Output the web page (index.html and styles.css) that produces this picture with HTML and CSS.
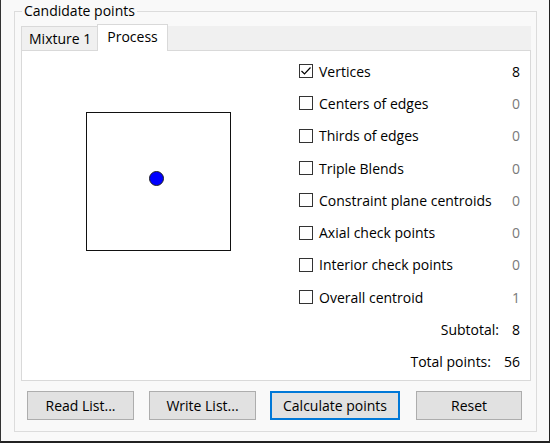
FILE: index.html
```html
<!DOCTYPE html>
<html>
<head>
<meta charset="utf-8">
<link rel="stylesheet" href="styles.css">
</head>
<body>
<div class="window">
  <fieldset class="group">
    <legend class="legend">Candidate points</legend>
    <div class="tabs">
      <div class="tab">Mixture 1</div>
      <div class="tab active">Process</div>
      <div class="strip-rest"></div>
    </div>
    <div class="panel">
      <div class="canvas">
        <div class="square"><div class="dot"></div></div>
      </div>
      <div class="list">
        <div class="row"><span class="box checked"><svg viewBox="0 0 14 14" width="14" height="14"><path d="M2.5 7 L5.5 10 L11.5 3.5" fill="none" stroke="#000" stroke-width="1.2"/></svg></span><span class="label">Vertices</span><span class="num dark">8</span></div>
        <div class="row"><span class="box"></span><span class="label">Centers of edges</span><span class="num">0</span></div>
        <div class="row"><span class="box"></span><span class="label">Thirds of edges</span><span class="num">0</span></div>
        <div class="row"><span class="box"></span><span class="label">Triple Blends</span><span class="num">0</span></div>
        <div class="row"><span class="box"></span><span class="label">Constraint plane centroids</span><span class="num">0</span></div>
        <div class="row"><span class="box"></span><span class="label">Axial check points</span><span class="num">0</span></div>
        <div class="row"><span class="box"></span><span class="label">Interior check points</span><span class="num">0</span></div>
        <div class="row"><span class="box"></span><span class="label">Overall centroid</span><span class="num">1</span></div>
        <div class="row total"><span class="tlabel">Subtotal:</span><span class="num dark">8</span></div>
        <div class="row total"><span class="tlabel">Total points:</span><span class="num dark">56</span></div>
      </div>
    </div>
    <div class="buttons">
      <button class="btn">Read List...</button>
      <button class="btn">Write List...</button>
      <button class="btn focus">Calculate points</button>
      <button class="btn last">Reset</button>
    </div>
  </fieldset>
</div>
</body>
</html>
```
FILE: styles.css
```css
html, body {
  margin: 0;
  padding: 0;
  background: #ffffff;
}
body {
  font-family: "Open Sans", "Noto Sans", "Liberation Sans", sans-serif;
  font-size: 13px;
  color: #000;
}
.window {
  width: 548px;
  height: 441px;
  background: #f9f9f9;
  border-left: 1px solid #333;
  border-right: 2px solid #222;
  border-bottom: 2px solid #222;
  box-sizing: content-box;
  padding: 0;
  position: relative;
}
.group {
  position: absolute;
  left: 13px;
  top: 3px;
  width: 522px;
  height: 429px;
  box-sizing: border-box;
  margin: 0;
  padding: 0 5px;
  border: 1px solid #dcdcdc;
  display: flex;
  flex-direction: column;
}
.legend {
  padding: 0 2px;
  margin-left: 2px;
  font-size: 14px;
  line-height: 16px;
  color: #000;
}
.tabs {
  display: flex;
  align-items: flex-end;
  height: 27px;
  margin-top: 4px;
  margin-left: 1px;
}
.tab {
  height: 24px;
  box-sizing: border-box;
  padding: 0 6px 0 7px;
  background: #f0f0f0;
  border: 1px solid #d9d9d9;
  border-bottom: none;
  font-size: 14px;
  line-height: 24px;
}
.tab.active {
  background: #fff;
  height: 27px;
  line-height: 24px;
  margin-bottom: -1px;
  position: relative;
  z-index: 1;
  padding: 0 9px;
  margin-left: -1px;
}
.strip-rest {
  flex: 1;
  align-self: stretch;
  background: #f0f0f0;
  margin-top: 3px;
}
.panel {
  height: 331px;
  box-sizing: border-box;
  background: #fff;
  border: 1px solid #d9d9d9;
  display: flex;
  margin-left: 1px;
  width: 510px;
}
.canvas {
  width: 277px;
  padding-top: 61px;
  padding-left: 64px;
  box-sizing: border-box;
}
.square {
  width: 145px;
  height: 139px;
  box-sizing: border-box;
  border: 1.5px solid #111;
  position: relative;
}
.dot {
  position: absolute;
  left: 62px;
  top: 58px;
  width: 15px;
  height: 15px;
  border-radius: 50%;
  background: #0000ff;
  border: 1px solid #202020;
  box-sizing: border-box;
}
.list {
  flex: 1;
  padding-top: 4px;
  padding-right: 10px;
}
.row {
  display: flex;
  align-items: center;
  height: 32.3px;
  font-size: 14px;
}
.box {
  width: 14px;
  height: 14px;
  box-sizing: border-box;
  border: 1px solid #333;
  background: #fff;
  margin-left: 0;
  margin-right: 6px;
  display: flex;
  align-items: center;
  justify-content: center;
}
.box svg { display: block; margin: -1px; }
.label { flex: 1; }
.num {
  color: #7a7a7a;
  text-align: right;
}
.num.dark { color: #000; }
.total { justify-content: flex-end; }
.tlabel { margin-right: 13px; }
.buttons {
  display: flex;
  padding: 10px 0 0 7px;
}
.btn {
  height: 29px;
  width: 107px;
  background: #e1e1e1;
  border: 1px solid #adadad;
  font-family: inherit;
  font-size: 14px;
  color: #000;
  padding: 0;
  margin-right: 15px;
}
.btn:nth-child(2) { margin-right: 14px; }
.btn.focus {
  width: 130px;
  border: 2px solid #0078d7;
  margin-right: 16px;
}
.btn.last { width: 106px; margin-right: 0; }
```
